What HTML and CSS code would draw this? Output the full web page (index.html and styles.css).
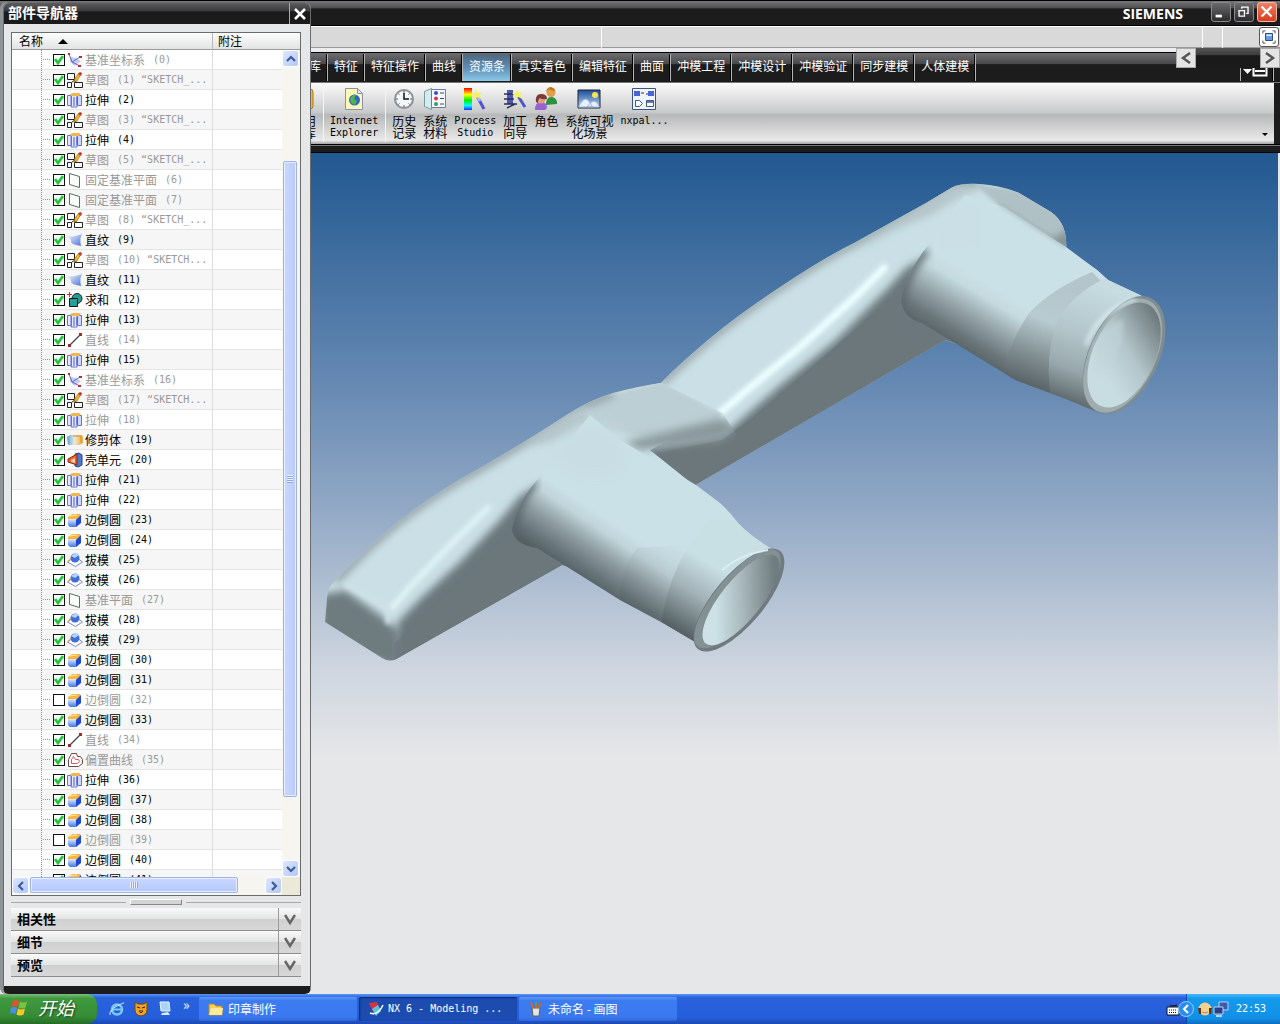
FILE: index.html
```html
<!DOCTYPE html>
<html lang="zh-CN">
<head>
    <meta charset="UTF-8">
    <meta name="viewport" content="width=device-width, initial-scale=1.0">
    <title>NX 6 - Modeling</title>
    <link rel="stylesheet" href="styles.css">
</head>
<body>
    <!-- icon sprite -->
    <svg class="sprite" aria-hidden="true">
        <defs>
            <linearGradient id="gBlue" x1="0" y1="0" x2="1" y2="1"><stop offset="0" stop-color="#f4f8ff"/><stop offset="1" stop-color="#4d73d8"/></linearGradient>
            <linearGradient id="gFace" x1="0" y1="0" x2="0" y2="1"><stop offset="0" stop-color="#dfe9ff"/><stop offset="1" stop-color="#3f78e0"/></linearGradient>
            <linearGradient id="gTrim" x1="0" y1="0" x2="1" y2="0"><stop offset="0" stop-color="#5f9be0"/><stop offset=".45" stop-color="#e6ecd8"/><stop offset="1" stop-color="#f3ab3c"/></linearGradient>
            <linearGradient id="gRainbow" x1="0" y1="0" x2="0" y2="1"><stop offset="0" stop-color="#f00"/><stop offset=".3" stop-color="#ff0"/><stop offset=".55" stop-color="#0e0"/><stop offset=".8" stop-color="#0ff"/><stop offset="1" stop-color="#22f"/></linearGradient>
            <linearGradient id="gSky" x1="0" y1="0" x2="0" y2="1"><stop offset="0" stop-color="#1c4c9c"/><stop offset="1" stop-color="#b9dcf4"/></linearGradient>
        </defs>
        <symbol id="csys" viewBox="0 0 16 16"><path d="M3 5l6 1 5 3-6 5-5-4z" fill="#c3caf6"/><path d="M5 10L2 2M5 10l8-5M5 10l8 4" stroke="#6668b8" fill="none"/><path d="M1 1h2v2H1zM12 4h3v2h-3zM11 13h3v2h-3z" fill="#b42f3c"/></symbol>
        <symbol id="sketch" viewBox="0 0 16 16"><path d="M.500 1.500h7v6h-7zM.500 10.500h4v5h-4zM7.500 10.500h8v5h-8zM4.500 10.500l4-3M7.500 7.500l2 3" fill="#fff" stroke="#222"/><path d="M7 10l1-4 4-5 2 1-4 7z" fill="#f2b52c" stroke="#8a5a10" stroke-width=".6"/><path d="M11 2l2-2 2 1-1 3z" fill="#c8352c"/></symbol>
        <symbol id="extrude" viewBox="0 0 16 16"><path d="M.500 3.500h4v10h-4zM4 3h6v12H4z" fill="#e5eaff" stroke="#6570d4"/><path d="M10.500 3.500h4v10h-4z" fill="#cfd8ff" stroke="#6570d4"/><path d="M3 2l3-1h6l2 1-2 2H4z" fill="#f0b74c"/><path d="M7 5v9M10 5v8" stroke="#4b55c9"/></symbol>
        <symbol id="plane" viewBox="0 0 16 16"><path d="M2.500 1.500l10 3v11l-10-3z" fill="#fbfffb" stroke="#546f5a"/></symbol>
        <symbol id="ruled" viewBox="0 0 16 16"><path d="M0 4c5 1 9 0 15-2-2 4-2 7-1 12C8 13 5 12 4 10 5 8 2 6 0 4z" fill="url(#gBlue)"/></symbol>
        <symbol id="unite" viewBox="0 0 16 16"><circle cx="10" cy="6.500" r="5" fill="#2a9a8e" stroke="#123"/><path d="M2.500 6.500h8v8h-8z" fill="#22a294" stroke="#111"/><path d="M0 2.500h5M2.500 0v5" stroke="#d22"/></symbol>
        <symbol id="line" viewBox="0 0 16 16"><path d="M2 14L14 2" stroke="#444" stroke-width="1.300"/><path d="M1 12h3v3H1zM12 1h3v3h-3z" fill="#a02a2a"/></symbol>
        <symbol id="trim" viewBox="0 0 16 16"><path d="M0 5l3-2h12l1 2v6l-3 2H1z" fill="url(#gTrim)"/><path d="M6 4h8v7" stroke="#e08a28" fill="none"/></symbol>
        <symbol id="shell" viewBox="0 0 16 16"><path d="M8 2l4-1 3 2v10l-4 2-3-1z" fill="#4a7ad0" stroke="#2b3f7c"/><path d="M1 7l9-5v11L1 10z" fill="#e8612c" stroke="#8b2a16"/><path d="M4 8l4-2v5l-4-1z" fill="#f8d0a0"/></symbol>
        <symbol id="blend" viewBox="0 0 16 16"><path d="M1 5l4-3h8l1 2-3 4H1z" fill="#f7b63c"/><path d="M1 7h8v8H3l-2-2z" fill="url(#gFace)"/><path d="M9 8l5-5v8l-5 4z" fill="#1c47d8"/><path d="M2 4l8-1" stroke="#ffe79a"/></symbol>
        <symbol id="draft" viewBox="0 0 16 16"><path d="M.500 10l4-3h7l4 3-7 4.500z" fill="#fff" stroke="#8084bb"/><circle cx="8" cy="6" r="4.500" fill="#3f6fd8"/><path d="M4 4l4-3 4 2-4 3z" fill="#b9d0ff"/><path d="M1 10l3-4" stroke="#d8943c"/></symbol>
        <symbol id="offset" viewBox="0 0 16 16"><path d="M1.500 14.500v-7l3-6h5l1 3h3l2 3v4l-4 3z" fill="#fff" stroke="#6f4a4a"/><path d="M4.500 11.500v-4l2-3 2 3h3l1 2-2 2z" fill="none" stroke="#d05a60"/></symbol>
        <symbol id="down" viewBox="0 0 12 12"><path d="M1 2l5 8 5-8" fill="none" stroke="#666" stroke-width="2.500"/></symbol>
        <symbol id="chev" viewBox="0 0 10 10"><path d="M1 7l4-4 4 4" fill="none" stroke="#3f5c96" stroke-width="2.200"/></symbol>
    </svg>

    <main class="app">
        <header class="titlebar">
            <span class="brand">SIEMENS</span>
            <div class="win-buttons">
                <button aria-label="最小化"><svg viewBox="0 0 20 20"><path d="M4 14.500h7" stroke="#fff" stroke-width="3"/></svg></button>
                <button aria-label="还原"><svg viewBox="0 0 20 20"><path d="M4.500 8.500h6v6h-6zM7.500 6.500V4.500h7v7h-2" fill="none" stroke="#fff" stroke-width="1.500"/></svg></button>
                <button class="close" aria-label="关闭"><svg viewBox="0 0 20 20"><path d="M4 4l11 11M15 4L4 15" stroke="#fff" stroke-width="2.500"/></svg></button>
            </div>
        </header>

        <div class="promptbar">
            <div class="cue"></div>
            <div class="status"></div>
            <div class="slot"></div>
            <div class="slot wide">
                <button class="full" aria-label="全屏"><svg viewBox="0 0 16 16"><path d="M1 4V1h3M12 1h3v3M15 12v3h-3M4 15H1v-3" fill="none" stroke="#444"/><path d="M4 4h8v8H4z" fill="#5f9aec" stroke="#223a66"/><path d="M5 5h6v2H5z" fill="#dceaff"/></svg></button>
            </div>
        </div>

        <nav class="tabs">
            <button>库</button>
            <button>特征</button>
            <button>特征操作</button>
            <button>曲线</button>
            <button class="active">资源条</button>
            <button>真实着色</button>
            <button>编辑特征</button>
            <button>曲面</button>
            <button>冲模工程</button>
            <button>冲模设计</button>
            <button>冲模验证</button>
            <button>同步建模</button>
            <button>人体建模</button>
            <button class="tab-menu" aria-label="选项"><svg viewBox="0 0 28 14"><path d="M0 6h9l-4.500 5z" fill="#fff"/><path d="M10.500 2.500h13v10h-13zM12 8h10" fill="none" stroke="#fff" stroke-width="2"/></svg></button>
            <div class="mini-scroll">
                <button aria-label="向左"><svg viewBox="0 0 12 12"><path d="M10 1L3 6l7 5" fill="none" stroke="#555" stroke-width="2.500"/></svg></button>
                <button aria-label="向右"><svg viewBox="0 0 12 12"><path d="M2 1l7 5-7 5" fill="none" stroke="#555" stroke-width="2.500"/></svg></button>
            </div>
        </nav>

        <div class="toolbar">
            <button class="tool cut"><svg viewBox="0 0 24 24"><path d="M12 2h6q3 0 3 3v14q0 3-3 3h-6z" fill="#f3b52c" stroke="#b07a12"/><path d="M14 5h4v14h-4z" fill="#fff3c0"/></svg><span>用<br>库</span></button>
            <i class="sep"></i>
            <button class="tool"><svg viewBox="0 0 24 24"><path d="M3.500 1.500h12l5 5v16h-17z" fill="#fff7b8" stroke="#8b93ac"/><path d="M15.500 1.500v5h5z" fill="#dfe6f6" stroke="#8b93ac"/><circle cx="12.500" cy="13" r="5.500" fill="#3663c8"/><path d="M8 12q3-5 6-4l-2 4 3 2-2 4q-5-1-5-6z" fill="#4fb54c"/></svg><span class="lat">Internet<br>Explorer</span></button>
            <i class="sep"></i>
            <button class="tool"><svg viewBox="0 0 24 24"><circle cx="12" cy="12" r="10" fill="#8a9199"/><circle cx="12" cy="12" r="8" fill="#f4f8fb"/><path d="M12 4v2M12 18v2M4 12h2M18 12h2M6.500 6.500l1 1M17.500 6.500l-1 1M6.500 17.500l1-1M17.500 17.500l-1-1" stroke="#555"/><path d="M12 6v6h5" fill="none" stroke="#111" stroke-width="1.500"/></svg><span>历史<br>记录</span></button>
            <button class="tool"><svg viewBox="0 0 24 24"><path d="M1.500 4.500l7-3v21l-7-3z" fill="#d4ecf0" stroke="#7b9aa4"/><path d="M8.500 2.500h14v18h-14z" fill="#f5f9ff" stroke="#6a7fa0"/><circle cx="13" cy="6" r="2" fill="#3a50c8"/><circle cx="13" cy="11.500" r="2" fill="#c83a50"/><circle cx="13" cy="17" r="2" fill="#3aa050"/><path d="M17 6h4M17 11.500h4M17 17h4" stroke="#445"/></svg><span>系统<br>材料</span></button>
            <button class="tool"><svg viewBox="0 0 24 24"><path d="M1 1h8v22H1z" fill="url(#gRainbow)"/><path d="M14 9l7 13" stroke="#4d56c8" stroke-width="3"/><path d="M14 9l3 5" stroke="#aab4ff" stroke-width="3"/><path d="M13 2l1 4 5-1-3 3 3 4-5-2-3 3v-4l-3-3h4z" fill="#f6f05c"/></svg><span class="lat">Process<br>Studio</span></button>
            <button class="tool"><svg viewBox="0 0 24 24"><path d="M4 3h6v14H4z" fill="#4c58b4"/><path d="M1 7h12M1 12h10M1 17h13M4 21l8-4" stroke="#2d2f55" stroke-width="1.500"/><path d="M15 9l7 11" stroke="#4d56c8" stroke-width="3"/><path d="M14 2l1 4 5-1-3 3 3 4-5-2-3 3v-4l-3-3h4z" fill="#f6f05c"/></svg><span>加工<br>向导</span></button>
            <button class="tool"><svg viewBox="0 0 24 24"><path d="M12 18q0-8 5-8t6 5v2z" fill="#2e9140"/><circle cx="17" cy="5.500" r="4.500" fill="#e0a04a"/><path d="M12 5q1-5 5-5 4 1 4 4-4 0-6-2z" fill="#c07818"/><path d="M1 23q0-8 6-8t6 6l-2 2z" fill="#9a62d0"/><circle cx="7" cy="12" r="4.500" fill="#e0a080"/><path d="M2 15q-1-8 5-8t6 5q-5 1-7-1-2 1-2 5z" fill="#7d3838"/></svg><span>角色</span></button>
            <button class="tool"><svg viewBox="0 0 24 24"><path d="M1 3h22v18H1z" fill="url(#gSky)" stroke="#223"/><circle cx="18" cy="8" r="3" fill="#ffe34c"/><path d="M1.500 20q4-8 7-8t7 8zM10 20q4-6 7-6t5.500 6z" fill="#e9efff" stroke="#8ea6cf" stroke-width=".8"/></svg><span>系统可视<br>化场景</span></button>
            <button class="tool"><svg viewBox="0 0 24 24"><path d="M.500 1.500h23v21H.500z" fill="#eef4fc" stroke="#3c567e"/><path d="M2 4h6v5H2zM16 4h6v5h-6z" fill="#4b63d8"/><path d="M9 6h3M14 7h2" stroke="#333"/><path d="M3.500 19.500v-6h4l3 3-3 3zM14.500 13.500h7v6h-7z" fill="#fff" stroke="#3c567e"/><path d="M15 14h6v2h-6z" fill="#5f7ab8"/></svg><span class="lat">nxpal...</span></button>
            <span class="more"></span>
        </div>
        <div class="toolbar-edge"></div>

        <section class="viewport">
            <svg class="model" viewBox="0 153 1280 841" preserveAspectRatio="xMinYMin meet" role="img" aria-label="三维模型">
                <defs>
                    <filter id="b2" x="-30%" y="-30%" width="160%" height="160%"><feGaussianBlur stdDeviation="2"/></filter>
                    <filter id="b4" x="-30%" y="-30%" width="160%" height="160%"><feGaussianBlur stdDeviation="4"/></filter>
                    <filter id="b8" x="-50%" y="-50%" width="200%" height="200%"><feGaussianBlur stdDeviation="8"/></filter>
                    <clipPath id="armRear"><path d="M600 400L661 383Q670 373 694 352Q722 327 758 302Q819 260 854 243L926 203L951 188Q960 183 979 184Q1000 185 1019 193L1051 212Q1068 224 1066 250L1097 270L1108 280L1060 380L945 340L695 485L600 460z"/></clipPath>
                    <clipPath id="armFront"><path d="M325 622L327 598Q327 588 335 581Q360 554 388 530Q430 495 480 468Q530 439 568 414Q590 400 613 393Q640 386 661 383L722 412L740 440L696 485L720 503L738 523L700 600L562 565L398 658Q390 663 382 658z"/></clipPath>
                    <clipPath id="tubeRear"><path d="M926 248L965 195L1004 207L1066 247L1097 270L1108 280L1140 295L1160 307L1125 408L1095 411L1061 397L1015 380L1004 373L922 323Q903 318 901 300Q905 275 926 248z"/></clipPath>
                    <clipPath id="tubeFront"><path d="M537 480L590 415L620 440L696 485L720 503Q730 512 738 523Q750 536 772 549L780 563L712 642L697 643L663 623L620 600L537 548Q515 545 512 530Q517 503 537 480z"/></clipPath>
                    <linearGradient id="shadeRear" gradientUnits="userSpaceOnUse" x1="975" y1="275" x2="938" y2="336"><stop offset="0" stop-color="#cae1e7"/><stop offset=".2" stop-color="#c4dade"/><stop offset=".5" stop-color="#96a5aa"/><stop offset=".8" stop-color="#6b777b"/><stop offset="1" stop-color="#586366"/></linearGradient>
                    <linearGradient id="shadeFront" gradientUnits="userSpaceOnUse" x1="612" y1="522" x2="576" y2="576"><stop offset="0" stop-color="#cae1e7"/><stop offset=".2" stop-color="#c0d4d9"/><stop offset=".5" stop-color="#8f9ea2"/><stop offset=".8" stop-color="#68757a"/><stop offset="1" stop-color="#536063"/></linearGradient>
                    <linearGradient id="taper" gradientUnits="userSpaceOnUse" x1="1070" y1="285" x2="1030" y2="388"><stop offset="0" stop-color="#b4c6cb"/><stop offset=".38" stop-color="#b8cbd0"/><stop offset=".75" stop-color="#7b888c"/><stop offset="1" stop-color="#566165"/></linearGradient>
                    <linearGradient id="collar" gradientUnits="userSpaceOnUse" x1="1110" y1="290" x2="1070" y2="400"><stop offset="0" stop-color="#c6dce1"/><stop offset=".45" stop-color="#b3c5ca"/><stop offset=".75" stop-color="#98a7ab"/><stop offset="1" stop-color="#626e71"/></linearGradient>
                    <linearGradient id="collarF" gradientUnits="userSpaceOnUse" x1="720" y1="570" x2="682" y2="632"><stop offset="0" stop-color="#c8dfe4"/><stop offset=".45" stop-color="#a3b3b8"/><stop offset="1" stop-color="#566265"/></linearGradient>
                    <linearGradient id="boreRear" gradientUnits="userSpaceOnUse" x1="1104" y1="375" x2="1146" y2="312"><stop offset="0" stop-color="#c8dde2"/><stop offset=".45" stop-color="#b3c5ca"/><stop offset="1" stop-color="#6f7b7e"/></linearGradient>
                    <linearGradient id="boreFront" gradientUnits="userSpaceOnUse" x1="722" y1="618" x2="768" y2="578"><stop offset="0" stop-color="#cce2e7"/><stop offset=".45" stop-color="#a9b8bc"/><stop offset="1" stop-color="#6f7c80"/></linearGradient>
                </defs>

                <!-- rear arm -->
                <g clip-path="url(#armRear)">
                    <path d="M590 170h540v330H590z" fill="#cae0e6"/>
                    <path d="M661 383Q670 373 694 352Q722 327 758 302Q819 260 854 243L926 203L951 188Q960 183 979 184" fill="none" stroke="#93a1a5" stroke-width="8" filter="url(#b4)"/>
                    <path d="M870 240L951 186L975 190L930 216Q890 228 860 250z" fill="#b6c6cb" filter="url(#b4)"/>
                    <path d="M975 184L1019 190L1075 220V262L1000 207z" fill="#b0c1c6" filter="url(#b2)"/>
                    <path d="M1070 225V255L1040 240Q1062 240 1070 225z" fill="#7f8c90" filter="url(#b4)"/>
                    <path d="M600 455L722 436L736 424L783 383L836 340L888 288L906 268L930 255L1000 350L690 500z" fill="#6b777b" filter="url(#b4)"/>
                    <path d="M650 455L722 440L750 420L800 377L850 334L892 296L905 330L950 335L945 342L690 495z" fill="#6b777b"/>
                    <path d="M720 413L747 390L801 346L854 298L884 268" fill="none" stroke="#eafdff" stroke-width="8" stroke-linecap="round" filter="url(#b2)"/>
                </g>

                <!-- front arm -->
                <g clip-path="url(#armFront)">
                    <path d="M320 380L664 380L722 414L650 450L700 490V600L380 665L320 640z" fill="#cae0e6"/>
                    <path d="M585 402L661 381L722 414L715 430L640 436L600 430z" fill="#bccfd4" filter="url(#b2)"/>
                    <path d="M622 442L724 418L736 428L722 440L640 450z" fill="#8b999d" filter="url(#b4)"/>
                    <path d="M335 581Q360 554 388 530Q430 495 480 468Q530 439 568 414Q590 400 613 393" fill="none" stroke="#8f9da2" stroke-width="8" filter="url(#b4)"/>
                    <path d="M520 445L580 408L600 420L550 442z" fill="#b4c4c9" filter="url(#b4)"/>
                    <path d="M398 622L420 599L460 562L500 520L520 496L540 484L560 520L590 575L392 670z" fill="#6b777b" filter="url(#b4)"/>
                    <path d="M394 668V644L430 608L470 572L508 532L560 555L575 562z" fill="#6b777b"/>
                    <path d="M320 595L345 590L384 618L400 632V670L320 640z" fill="#6e7b80" filter="url(#b4)"/>
                    <path d="M387 632V662" stroke="#4e5d62" stroke-width="4" filter="url(#b2)"/>
                    <path d="M390 610L410 587L453 542L490 506" fill="none" stroke="#dff3f6" stroke-width="6" filter="url(#b2)"/>
                    <path d="M345 584L388 608V624" fill="none" stroke="#cfe3e8" stroke-width="5" filter="url(#b2)"/>
                </g>

                <!-- rear tube -->
                <g clip-path="url(#tubeRear)">
                    <path d="M890 180h290v240H890z" fill="url(#shadeRear)"/>
                    <path d="M926 250Q898 282 900 320" fill="none" stroke="#5b676b" stroke-width="8" filter="url(#b4)"/>
                    <path d="M1092 272Q1050 290 1029 313Q1008 345 1003 374L1062 402L1110 290z" fill="url(#taper)"/>
                    <path d="M1106 278Q1072 294 1058 320Q1044 355 1051 400L1110 425L1170 300z" fill="url(#collar)"/>
                </g>
                <g clip-path="url(#armRear)">
                    <path d="M932 232L962 200L985 212L975 250L945 250z" fill="#cae0e6" filter="url(#b8)"/>
                    <path d="M1000 204L1066 247" stroke="#9aa9ad" stroke-width="2" filter="url(#b2)"/>
                </g>
                <g transform="rotate(25 1124 355)">
                    <ellipse cx="1124" cy="355" rx="35" ry="63" fill="#7f8c90"/>
                    <ellipse cx="1123" cy="356" rx="33" ry="61" fill="#9fadb1"/>
                </g>
                <path d="M1086 345Q1098 311 1136 299" fill="none" stroke="#dff1f4" stroke-width="3" filter="url(#b2)"/>
                <ellipse cx="1124" cy="355" rx="31" ry="56" transform="rotate(25 1124 355)" fill="url(#boreRear)"/>
                <path d="M1124 318Q1125 350 1102 376Q1086 372 1094 344Q1104 326 1124 318z" fill="#c2d6da" opacity=".5" filter="url(#b2)"/>

                <!-- front tube -->
                <g clip-path="url(#tubeFront)">
                    <path d="M500 400h300v260H500z" fill="url(#shadeFront)"/>
                    <path d="M535 482Q512 505 512 545" fill="none" stroke="#59656a" stroke-width="8" filter="url(#b4)"/>
                    <path d="M637 548Q618 575 620 602L697 648L730 600L690 545z" fill="url(#collarF)" opacity=".35"/>
                    <path d="M710 520Q670 560 661 625L700 650L790 570L740 520z" fill="url(#collarF)"/>
                </g>
                <g clip-path="url(#armFront)">
                    <path d="M552 450L588 420L625 440L620 475L570 475z" fill="#c8dee4" filter="url(#b8)"/>
                </g>
                <g transform="rotate(40 739 600)">
                    <ellipse cx="739" cy="600" rx="25" ry="64" fill="#6f7b7f"/>
                    <ellipse cx="737" cy="600" rx="22" ry="62" fill="#839195"/>
                </g>
                <path d="M722 570Q740 554 768 550" fill="none" stroke="#d9eef2" stroke-width="2"/>
                <ellipse cx="741" cy="600" rx="20" ry="56" transform="rotate(39 741 600)" fill="url(#boreFront)"/>
            </svg>
        </section>
    </main>

    <aside class="navigator">
        <header class="nav-title">
            <h1>部件导航器</h1>
            <button aria-label="关闭导航器"><svg viewBox="0 0 12 12"><path d="M1 1l10 10M11 1L1 11" stroke="#fff" stroke-width="2.500"/></svg></button>
        </header>
        <div class="nav-body">
            <div class="tree-box">
                <div class="tree-view">
                    <table class="tree">
                        <thead>
                            <tr><th class="col-name">名称<span class="sort"></span></th><th>附注</th></tr>
                        </thead>
                        <tbody id="rows"></tbody>
                    </table>
                </div>
                <div class="vscroll">
                    <div class="head-fill"></div>
                    <button aria-label="向上滚动"><svg><use href="#chev"/></svg></button>
                    <div class="track">
                        <div class="thumb"></div>
                    </div>
                    <button class="flip" aria-label="向下滚动"><svg><use href="#chev"/></svg></button>
                </div>
                <div class="hscroll">
                    <button class="left" aria-label="向左滚动"><svg><use href="#chev"/></svg></button>
                    <div class="track">
                        <div class="thumb"></div>
                    </div>
                    <button class="right" aria-label="向右滚动"><svg><use href="#chev"/></svg></button>
                </div>
                <div class="corner"></div>
            </div>
            <div class="splitter"><i></i><b></b><i></i></div>
            <button class="fold"><span>相关性</span><svg><use href="#down"/></svg></button>
            <button class="fold"><span>细节</span><svg><use href="#down"/></svg></button>
            <button class="fold"><span>预览</span><svg><use href="#down"/></svg></button>
        </div>
    </aside>

    <footer class="taskbar">
        <button class="start"><svg viewBox="0 0 20 20"><path d="M3 4q3-2 6 0L7.500 10q-3-2-6 0z" fill="#e8502c"/><path d="M10 4.500q3 2 7 0L15.500 10.500q-4 2-7 0z" fill="#7cc242"/><path d="M1 11q3-2 6 0L5.500 17q-3-2-5.500 0z" fill="#4a8ef0"/><path d="M8 11.500q3 2 7 0L13.500 17.500q-4 2-7 0z" fill="#fbc726"/></svg>开始</button>
        <div class="quick">
            <button aria-label="Internet Explorer"><svg viewBox="0 0 16 16"><circle cx="8" cy="8.500" r="5" fill="none" stroke="#7cc8f6" stroke-width="2.500"/><path d="M4 8.500h9" stroke="#7cc8f6" stroke-width="2"/><path d="M1 14Q0 9 8 5t7-3" fill="none" stroke="#d8ecff"/></svg></button>
            <button aria-label="老虎"><svg viewBox="0 0 16 16"><path d="M2 1l3 2h6l3-2v8q0 5-6 6-6-1-6-6z" fill="#f0a424" stroke="#7c4408"/><path d="M4 6l3 1M12 6L9 7M6 10h4l-2 2z" stroke="#3a1c04" fill="#fff"/></svg></button>
            <button aria-label="显示桌面"><svg viewBox="0 0 16 16"><path d="M3 1h9l1 9H4z" fill="#a8d4fa" stroke="#e8f4ff"/><path d="M5 12l6-1 2 3H4z" fill="#dfeaf6"/></svg></button>
            <span class="arrows">»</span>
        </div>
        <button class="task"><svg viewBox="0 0 16 16"><path d="M1 3h5l2 2h6v9H1z" fill="#f7cf5a" stroke="#b98a1c"/><path d="M3 7h12l-1 7H1z" fill="#fdea9a"/></svg><span>印章制作</span></button>
        <button class="task current"><svg viewBox="0 0 16 16"><path d="M1 2l8-1 2 5-6 5z" fill="#d83240"/><path d="M4 8l6-4 3 6-5 5z" fill="#58c4dc"/><path d="M2 12q8 3 13-8" fill="none" stroke="#fff" stroke-width="1.500"/></svg><span class="lat">NX 6 - Modeling ...</span></button>
        <button class="task"><svg viewBox="0 0 16 16"><path d="M4 7h8l-1 8H5z" fill="#dce6ef" stroke="#7a5a3a"/><path d="M5 7L3 1M8 7V1M10 7l3-5" stroke="#c86a2c" stroke-width="2"/><path d="M7 1h2v3H7z" fill="#4ab04a"/></svg><span>未命名 - 画图</span></button>
        <div class="tray-left"><svg viewBox="0 0 14 12"><path d="M1 3h12v8H1z" fill="#fff" stroke="#111"/><path d="M3 6h8M3 8.500h8" stroke="#111" stroke-dasharray="1 1"/><path d="M4 1l3 1 4-1" stroke="#111" fill="none"/></svg></div>
        <div class="tray">
            <button class="expand" aria-label="展开"><svg viewBox="0 0 16 16"><circle cx="8" cy="8" r="7.500" fill="#2a8cec" stroke="#8cd0fc"/><path d="M10 4L6 8l4 4" fill="none" stroke="#fff" stroke-width="2"/></svg></button>
            <svg viewBox="0 0 16 16"><circle cx="8" cy="8" r="6.500" fill="#f3cf90"/><path d="M1 7h3v6H2zM12 7h3l-1 6h-2z" fill="#5c3410"/><path d="M5 11q3 2 6 0" stroke="#b86" fill="none"/></svg>
            <svg viewBox="0 0 16 16"><path d="M6 1h9v8H6z" fill="#3a5cb0" stroke="#c0d0e8"/><path d="M1 6h9v7H1z" fill="#28408c" stroke="#c0d0e8"/><path d="M3 15h6" stroke="#c0d0e8" stroke-width="2"/></svg>
            <time class="lat">22:53</time>
        </div>
    </footer>
    <script src="app.js"></script>
</body>
</html>
```
FILE: styles.css
```css
* {
    box-sizing: border-box;
}
body {
    margin: 0;
    height: 100vh;
    display: flex;
    flex-direction: column;
    position: relative;
    overflow: hidden;
    font-family: "Noto Sans CJK SC", sans-serif;
    font-size: 12px;
    line-height: 16px;
    color: #000;
    background: #e6e7e9;
}
button {
    font: inherit;
    color: inherit;
    border: 0;
    padding: 0;
    margin: 0;
    background: none;
    cursor: pointer;
}
svg {
    display: block;
    flex: none;
}
.sprite {
    width: 0;
    height: 0;
    position: absolute;
}
.lat {
    font-family: "DejaVu Sans Mono", monospace;
    font-size: 10px;
}

/* main window */
.app {
    flex: 1;
    min-height: 0;
    display: flex;
    flex-direction: column;
}
.titlebar {
    height: 26px;
    display: flex;
    align-items: center;
    justify-content: flex-end;
    gap: 28px;
    padding-right: 3px;
    border-top: 1px solid #000;
    border-bottom: 1px solid #000;
    background: linear-gradient(#77777a, #4c4c4f 30%, #1c1c1c 32%, #1c1c1c);
}
.brand {
    color: #fff;
    font-family: "Open Sans", sans-serif;
    font-weight: 700;
    font-size: 14px;
    padding-top: 2px;
}
.win-buttons {
    display: flex;
    gap: 3px;
    padding-bottom: 2px;
}
.win-buttons button {
    width: 20px;
    height: 20px;
    border: 1px solid #8a8a8c;
    border-radius: 3px;
    background: linear-gradient(#6a6a6c, #2c2c2e);
}
.win-buttons .close {
    border-color: #f4b8a8;
    background: linear-gradient(#ee8066, #dc3c1c);
}
.promptbar {
    height: 26px;
    display: flex;
    background: #d9d9d9;
    border-bottom: 4px solid #ececee;
    box-shadow: inset 0 1px #fff, inset 0 -1px #9a9a9c;
}
.cue {
    flex: 1;
}
.status {
    flex: 1;
    border-left: 1px solid #fff;
}
.slot {
    width: 20px;
    border-left: 1px solid #fff;
}
.slot.wide {
    width: 58px;
    display: flex;
    justify-content: flex-end;
}
.full {
    width: 20px;
    height: 20px;
    padding: 2px;
    margin: 1px 1px 0 0;
    border: 1px solid #555;
    border-radius: 3px;
    background: #fff;
}
.tabs {
    height: 31px;
    display: flex;
    position: relative;
    padding: 1px 6px 1px 303px;
    border-top: 1px solid #000;
    border-bottom: 1px solid #777;
    background: linear-gradient(#6f6f72, #48484a 38%, #1c1c1c 40%, #1c1c1c);
    color: #fff;
}
.tabs > button {
    padding: 0 6px 3px;
    border-right: 1px solid #b5b5b5;
    box-shadow: inset -1px 0 #000;
    white-space: nowrap;
}
.tabs > .active {
    background: linear-gradient(#50667c, #5d8db5 50%, #8cc9ea);
}
.tabs > .tab-menu {
    margin-left: auto;
    padding: 5px 2px 0;
    border-left: 1px solid #b5b5b5;
}
.tab-menu svg {
    width: 28px;
    height: 14px;
}
.mini-scroll {
    position: absolute;
    top: -5px;
    right: 0;
    width: 104px;
    height: 20px;
    display: flex;
    justify-content: space-between;
    background: linear-gradient(#555, #3c3c3c 35%, #1a1a1a 38%);
}
.mini-scroll button {
    width: 20px;
    border: 1px solid #aaa;
    background: #e4e4e4;
}
.mini-scroll svg {
    width: 12px;
    height: 12px;
    margin: auto;
}
.toolbar {
    height: 61px;
    display: flex;
    gap: 7px;
    padding: 4px 3px 0 298px;
    position: relative;
    border-right: 6px solid #1c1c1c;
    background: linear-gradient(#fbfbfb, #c9cacb 48%, #b7b8b9 52%, #e9e9e9 94%, #a2a2a2);
}
.tool {
    display: flex;
    flex-direction: column;
    align-items: center;
    gap: 4px;
    line-height: 12px;
    white-space: nowrap;
}
.tool.cut {
    width: 18px;
    align-items: flex-end;
}
.tool svg {
    width: 24px;
    height: 24px;
}
.sep {
    border-left: 1px solid #f4f4f4;
    margin: -3px -1px 2px 0;
}
.more {
    align-self: flex-end;
    margin: 0 3px 8px auto;
    border: 3px solid transparent;
    border-top-color: #000;
    border-bottom: 0;
}
.toolbar-edge {
    height: 9px;
    background: #1c1c1c;
    border-top: 1px solid #000;
    border-bottom: 1px solid #000;
    box-shadow: inset 0 1px #777;
}
.viewport {
    flex: 1;
    min-height: 0;
    overflow: hidden;
    border-right: 2px solid #e6e7e9;
    background: linear-gradient(#215890, #6488b2 27%, #91a8c5 42%, #cdd5df 61%, #e6e7e9 72%);
}
.model {
    width: 1280px;
    height: 841px;
}

/* part navigator */
.navigator {
    position: absolute;
    left: 3px;
    top: 2px;
    bottom: 30px;
    width: 308px;
    display: flex;
    flex-direction: column;
    border: 1px solid #6c6c6c;
    border-bottom: 8px solid #1c1c1c;
    border-radius: 6px;
    background: #e6e7e8;
    box-shadow: -3px 0 #8e9396;
}
.nav-title {
    height: 21px;
    display: flex;
    align-items: stretch;
    justify-content: space-between;
    border-radius: 5px 5px 0 0;
    color: #fff;
    background: linear-gradient(#5c5c5e, #3a3a3c 38%, #1b1b1b 42%);
}
.nav-title h1 {
    margin: 0;
    padding-left: 4px;
    font-size: 14px;
    line-height: 18px;
    font-weight: 700;
}
.nav-title button {
    width: 21px;
    border-left: 1px solid #aaa;
}
.nav-title svg {
    width: 12px;
    height: 12px;
    margin: auto;
}
.nav-body {
    flex: 1;
    min-height: 0;
    display: flex;
    flex-direction: column;
    padding: 8px 9px 9px 7px;
}
.tree-box {
    flex: 1;
    min-height: 0;
    display: grid;
    grid-template-columns: 1fr 18px;
    grid-template-rows: minmax(0, 1fr) 18px;
    border: 1px solid #6b6b6b;
    background: #fff;
}
.tree-view {
    overflow: hidden;
    min-height: 0;
}
.tree {
    width: 100%;
    table-layout: fixed;
    border-collapse: separate;
    border-spacing: 0;
}
.tree th,
.head-fill {
    height: 17px;
    border-bottom: 1px solid #9b9b9b;
    background: linear-gradient(#fdfdfd, #e2e3e3);
}
.tree th {
    padding: 0 0 0 5px;
    text-align: left;
    font-weight: 400;
    line-height: 16px;
}
.tree .col-name {
    width: 201px;
    padding-left: 7px;
    border-right: 1px solid #bbb;
}
.sort {
    display: inline-block;
    margin: 0 0 2px 15px;
    border: 5px solid transparent;
    border-top: 0;
    border-bottom-color: #000;
}
.tree td {
    height: 20px;
    padding: 0;
    border-bottom: 1px solid #e4e4e4;
}
.tree td:first-child {
    border-right: 1px solid #ddd;
}
.tree tbody tr:nth-child(even) {
    background: #f6f6f6;
}
.node {
    height: 19px;
    margin-left: 29px;
    display: flex;
    align-items: center;
    border-left: 1px dotted #8a8a8a;
    white-space: nowrap;
}
.node::before {
    content: "";
    width: 7px;
    margin: 0 3px 0 1px;
    border-top: 1px dotted #999;
}
.node input {
    appearance: none;
    width: 12px;
    height: 12px;
    margin: 0 2px 0 0;
    border: 1px solid #111;
    background: #fff;
}
.node input:checked {
    background: #fff url("data:image/svg+xml,%3Csvg xmlns='http://www.w3.org/2000/svg' viewBox='0 0 10 10'%3E%3Cpath d='M1 4l3 4 5-7' fill='none' stroke='%2322c83c' stroke-width='2.800'/%3E%3C/svg%3E");
}
.node svg {
    width: 16px;
    height: 16px;
}
.node label {
    display: flex;
    gap: 8px;
    padding-left: 2px;
}
.node .off {
    color: #999;
}

/* scroll bars */
.vscroll {
    display: flex;
    flex-direction: column;
    background: #f6f5f0;
}
.vscroll button,
.hscroll button {
    width: 17px;
    height: 17px;
    display: flex;
    align-items: center;
    justify-content: center;
    border: 1px solid #fff;
    border-radius: 3px;
    background: linear-gradient(135deg, #dbe6ff, #b4c8f8);
}
.vscroll svg,
.hscroll svg {
    width: 10px;
    height: 10px;
}
.flip svg {
    transform: rotate(180deg);
}
.left svg {
    transform: rotate(-90deg);
}
.right svg {
    transform: rotate(90deg);
}
.vscroll .track {
    flex: 1;
    display: grid;
    grid-template-rows: 94fr 636fr 63fr;
}
.thumb {
    border: 1px solid #9cb4ea;
    border-radius: 2px;
    box-shadow: inset 0 0 0 1px #e6eeff;
}
.vscroll .thumb {
    grid-row: 2;
    margin: 0 3px 0 1px;
    background: repeating-linear-gradient(#eef3ff 0 1px, #8fa8e0 1px 2px) center / 6px 8px no-repeat, linear-gradient(90deg, #c9d8ff, #b8cbfa);
}
.hscroll {
    display: flex;
    background: #f6f5f0;
}
.hscroll .track {
    flex: 1;
    display: grid;
    grid-template-columns: 209fr 27fr;
}
.hscroll .thumb {
    margin: 0 0 2px 1px;
    background: repeating-linear-gradient(90deg, #eef3ff 0 1px, #8fa8e0 1px 2px) center / 8px 6px no-repeat, linear-gradient(#c9d8ff, #b4c8fa);
}
.corner {
    background: #ece9d8;
}
.splitter {
    height: 12px;
    flex: none;
    display: flex;
    align-items: center;
    gap: 4px;
}
.splitter i {
    flex: 1;
    border-top: 1px solid #a8a8a8;
}
.splitter b {
    width: 52px;
    height: 6px;
    border: 1px solid #fff;
    border-right-color: #888;
    border-bottom-color: #888;
    background: #d4d4d4;
}
.fold {
    height: 23px;
    flex: none;
    display: flex;
    align-items: center;
    justify-content: space-between;
    padding-left: 6px;
    border-bottom: 1px solid #8e8e8e;
    background: linear-gradient(#fafafa, #e2e3e3 50%, #cfd0d0 52%, #d8d8d8);
    font-size: 13px;
    font-weight: 700;
}
.fold svg {
    width: 23px;
    height: 22px;
    padding: 4px 5px;
    border-left: 1px solid #999;
}

/* taskbar */
.taskbar {
    height: 30px;
    flex: none;
    display: flex;
    align-items: stretch;
    color: #fff;
    background: linear-gradient(#5a96f6, #2a62dc 12%, #245edb 80%, #1c48b0);
}
.start {
    width: 97px;
    display: flex;
    align-items: center;
    gap: 8px;
    padding: 0 0 4px 10px;
    border-radius: 0 10px 10px 0;
    background: linear-gradient(#7cbc7c, #3f9a3f 15%, #368c36 75%, #266c26);
    font-size: 18px;
    font-style: italic;
    text-shadow: 1px 1px 2px #1c3c1c;
}
.start svg {
    width: 20px;
    height: 20px;
}
.quick {
    width: 102px;
    display: flex;
    align-items: center;
    gap: 8px;
    padding-left: 12px;
}
.quick svg,
.task svg,
.tray svg {
    width: 16px;
    height: 16px;
}
.arrows {
    padding: 0 0 10px 2px;
    font-size: 14px;
}
.task {
    width: 158px;
    display: flex;
    align-items: center;
    gap: 4px;
    padding-left: 9px;
    margin: 3px 2px 3px 0;
    border-radius: 2px;
    background: linear-gradient(#6098fa, #3c7cf0 15%, #3a78f0 85%, #2e66d8);
    white-space: nowrap;
}
.task.current {
    background: #1c4cb0;
    box-shadow: inset 1px 1px 2px #0c2c78;
}
.tray-left {
    margin-left: auto;
    padding: 10px 6px 0 0;
}
.tray-left svg {
    width: 14px;
    height: 12px;
}
.tray {
    width: 94px;
    display: flex;
    align-items: center;
    border-left: 1px solid #0c4cb0;
    background: linear-gradient(#4cb8f8, #149aec 15%, #1290e8 80%, #0c6cc0);
}
.expand {
    margin-left: -9px;
    margin-right: 3px;
}
.tray time {
    padding-left: 7px;
}
```
FILE: app.js
```js
// [icon, name, flags] - g: greyed name, x: unticked, s: shows sketch name
var features = [
    ['csys', '基准坐标系', 'g'], ['sketch', '草图', 'gs'], ['extrude', '拉伸', ''], ['sketch', '草图', 'gs'],
    ['extrude', '拉伸', ''], ['sketch', '草图', 'gs'], ['plane', '固定基准平面', 'g'], ['plane', '固定基准平面', 'g'],
    ['sketch', '草图', 'gs'], ['ruled', '直纹', ''], ['sketch', '草图', 'gs'], ['ruled', '直纹', ''],
    ['unite', '求和', ''], ['extrude', '拉伸', ''], ['line', '直线', 'g'], ['extrude', '拉伸', ''],
    ['csys', '基准坐标系', 'g'], ['sketch', '草图', 'gs'], ['extrude', '拉伸', 'g'], ['trim', '修剪体', ''],
    ['shell', '壳单元', ''], ['extrude', '拉伸', ''], ['extrude', '拉伸', ''], ['blend', '边倒圆', ''],
    ['blend', '边倒圆', ''], ['draft', '拔模', ''], ['draft', '拔模', ''], ['plane', '基准平面', 'g'],
    ['draft', '拔模', ''], ['draft', '拔模', ''], ['blend', '边倒圆', ''], ['blend', '边倒圆', ''],
    ['blend', '边倒圆', 'gx'], ['blend', '边倒圆', ''], ['line', '直线', 'g'], ['offset', '偏置曲线', 'g'],
    ['extrude', '拉伸', ''], ['blend', '边倒圆', ''], ['blend', '边倒圆', ''], ['blend', '边倒圆', 'gx'],
    ['blend', '边倒圆', ''], ['blend', '边倒圆', '']
];

document.getElementById('rows').innerHTML = features.map(function (f, i) {
    var note = '(' + i + ')';
    if (f[2].includes('s')) {
        note += i < 10 ? ' “SKETCH_...' : ' “SKETCH...';
    }
    return '<tr><td><div class="node">' +
        '<input type="checkbox" id="f' + i + '"' + (f[2].includes('x') ? '' : ' checked') + '>' +
        '<svg><use href="#' + f[0] + '"/></svg>' +
        '<label for="f' + i + '"' + (f[2].includes('g') ? ' class="off"' : '') + '>' +
        '<span>' + f[1] + '</span><span class="lat">' + note + '</span></label>' +
        '</div></td><td></td></tr>';
}).join('');
```
